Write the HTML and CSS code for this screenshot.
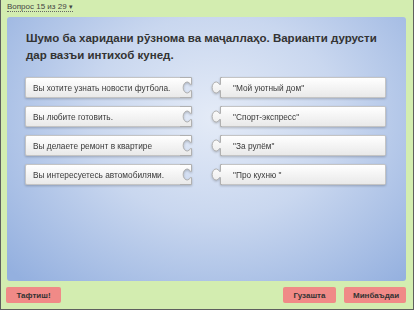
FILE: index.html
```html
<!DOCTYPE html>
<html lang="ru">
<head>
  <meta charset="UTF-8">
  <title>Вопрос 15 из 29</title>
  <link rel="stylesheet" href="styles.css">
</head>
<body>

<svg class="defs" width="0" height="0">
  <defs>
    <linearGradient id="cardFill" x1="0" y1="0" x2="0" y2="1">
      <stop offset="0" stop-color="#ffffff"/>
      <stop offset="1" stop-color="#e9e9e9"/>
    </linearGradient>
  </defs>
</svg>

<div class="frame">
  <div class="topbar">
    <span class="qnum">Вопрос 15 из 29 <span class="arrow">&#9662;</span></span>
  </div>

  <div class="panel">
    <div class="question">Шумо ба харидани рӯзнома ва маҷаллаҳо. Варианти дурусти дар вазъи интихоб кунед.</div>

    <div class="pairs">
      <div class="col">
        <div class="card left">
          <span class="txt">Вы хотите узнать новости футбола.</span>
          <svg class="notch" viewBox="0 0 12 21" width="12" height="21"><path d="M0,0.5 H11.5 V7.5 H10.5 A4,5.5 0 1 0 10.5,13.5 H11.5 V20.5 H0" /></svg>
        </div>
        <div class="card left">
          <span class="txt">Вы любите готовить.</span>
          <svg class="notch" viewBox="0 0 12 21" width="12" height="21"><path d="M0,0.5 H11.5 V7.5 H10.5 A4,5.5 0 1 0 10.5,13.5 H11.5 V20.5 H0" /></svg>
        </div>
        <div class="card left">
          <span class="txt">Вы делаете ремонт в квартире</span>
          <svg class="notch" viewBox="0 0 12 21" width="12" height="21"><path d="M0,0.5 H11.5 V7.5 H10.5 A4,5.5 0 1 0 10.5,13.5 H11.5 V20.5 H0" /></svg>
        </div>
        <div class="card left">
          <span class="txt">Вы интересуетесь автомобилями.</span>
          <svg class="notch" viewBox="0 0 12 21" width="12" height="21"><path d="M0,0.5 H11.5 V7.5 H10.5 A4,5.5 0 1 0 10.5,13.5 H11.5 V20.5 H0" /></svg>
        </div>
      </div>

      <div class="col">
        <div class="card right">
          <svg class="tab" viewBox="0 0 12 21" width="12" height="21"><path d="M12,0.5 H10.5 V7.5 H9.5 A4,5.5 0 1 0 9.5,13.5 H10.5 V20.5 H12" /></svg>
          <span class="txt">"Мой уютный дом"</span>
        </div>
        <div class="card right">
          <svg class="tab" viewBox="0 0 12 21" width="12" height="21"><path d="M12,0.5 H10.5 V7.5 H9.5 A4,5.5 0 1 0 9.5,13.5 H10.5 V20.5 H12" /></svg>
          <span class="txt">"Спорт-экспресс"</span>
        </div>
        <div class="card right">
          <svg class="tab" viewBox="0 0 12 21" width="12" height="21"><path d="M12,0.5 H10.5 V7.5 H9.5 A4,5.5 0 1 0 9.5,13.5 H10.5 V20.5 H12" /></svg>
          <span class="txt">"За рулём"</span>
        </div>
        <div class="card right">
          <svg class="tab" viewBox="0 0 12 21" width="12" height="21"><path d="M12,0.5 H10.5 V7.5 H9.5 A4,5.5 0 1 0 9.5,13.5 H10.5 V20.5 H12" /></svg>
          <span class="txt">"Про кухню "</span>
        </div>
      </div>
    </div>
  </div>

  <div class="footer">
    <button class="btn">Тафтиш!</button>
    <div class="nav">
      <button class="btn">Гузашта</button>
      <button class="btn">Минбаъдаи</button>
    </div>
  </div>
</div>

</body>
</html>
```

FILE: styles.css
```css
body {
  margin: 0;
  font-family: "Liberation Sans", Arial, sans-serif;
  color: #333;
}
.defs {
  position: absolute;
  width: 0;
  height: 0;
}
.frame {
  width: 414px;
  height: 310px;
  box-sizing: border-box;
  background: #d3edb0;
  border-left: 1px solid #5e5e5e;
  border-right: 1px solid #5e5e5e;
  border-bottom: 1px solid #5e5e5e;
  display: flex;
  flex-direction: column;
}
.topbar {
  height: 17px;
  padding: 1px 0 0 6px;
  box-sizing: border-box;
  font-size: 8px;
  line-height: 12px;
  color: #444;
}
.qnum {
  border-bottom: 1px dotted #666;
}
.arrow {
  font-size: 7px;
}
.panel {
  height: 264px;
  margin: 0 7px 0 6px;
  border-radius: 3px;
  background: radial-gradient(ellipse 70% 85% at 52% 38%, #e4ebf7 0%, #c9d7ef 45%, #94b0df 100%);
  padding: 13px 0 0 19px;
  box-sizing: border-box;
}
.question {
  font-size: 11.5px;
  font-weight: bold;
  line-height: 17px;
  color: #333;
  width: 358px;
}
.pairs {
  display: flex;
  gap: 18px;
  margin-top: 13px;
  margin-left: -1px;
}
.col {
  display: flex;
  flex-direction: column;
  gap: 8px;
}
.card {
  display: flex;
  height: 21px;
  font-size: 8.3px;
  color: #3a3a3a;
  filter: drop-shadow(0 1px 1px rgba(0, 0, 0, 0.22));
}
.card .txt {
  display: flex;
  align-items: center;
  box-sizing: border-box;
  height: 21px;
  background: linear-gradient(#ffffff, #e9e9e9);
  border-top: 1px solid #c4c4c4;
  border-bottom: 1px solid #c4c4c4;
  white-space: nowrap;
}
.card.left .txt {
  width: 155px;
  padding-left: 7px;
  border-left: 1px solid #c4c4c4;
  border-radius: 2px 0 0 2px;
}
.card.right .txt {
  width: 164px;
  padding-left: 11px;
  border-right: 1px solid #c4c4c4;
  border-radius: 0 2px 2px 0;
}
.card svg {
  display: block;
}
.card svg path {
  fill: url(#cardFill);
  stroke: #b0b0b0;
  stroke-width: 1;
}
.footer {
  display: flex;
  justify-content: space-between;
  padding: 6px 7px 0 5px;
}
.nav {
  display: flex;
  gap: 8px;
}
.btn {
  height: 16px;
  padding: 0 9px;
  border: none;
  border-radius: 2px;
  background: #f08a87;
  font-family: "Liberation Sans", Arial, sans-serif;
  font-size: 8px;
  font-weight: bold;
  color: #333;
}
.footer > .btn {
  width: 55px;
}
.nav .btn:first-child {
  width: 53px;
}
.nav .btn:last-child {
  width: 62px;
}
```
